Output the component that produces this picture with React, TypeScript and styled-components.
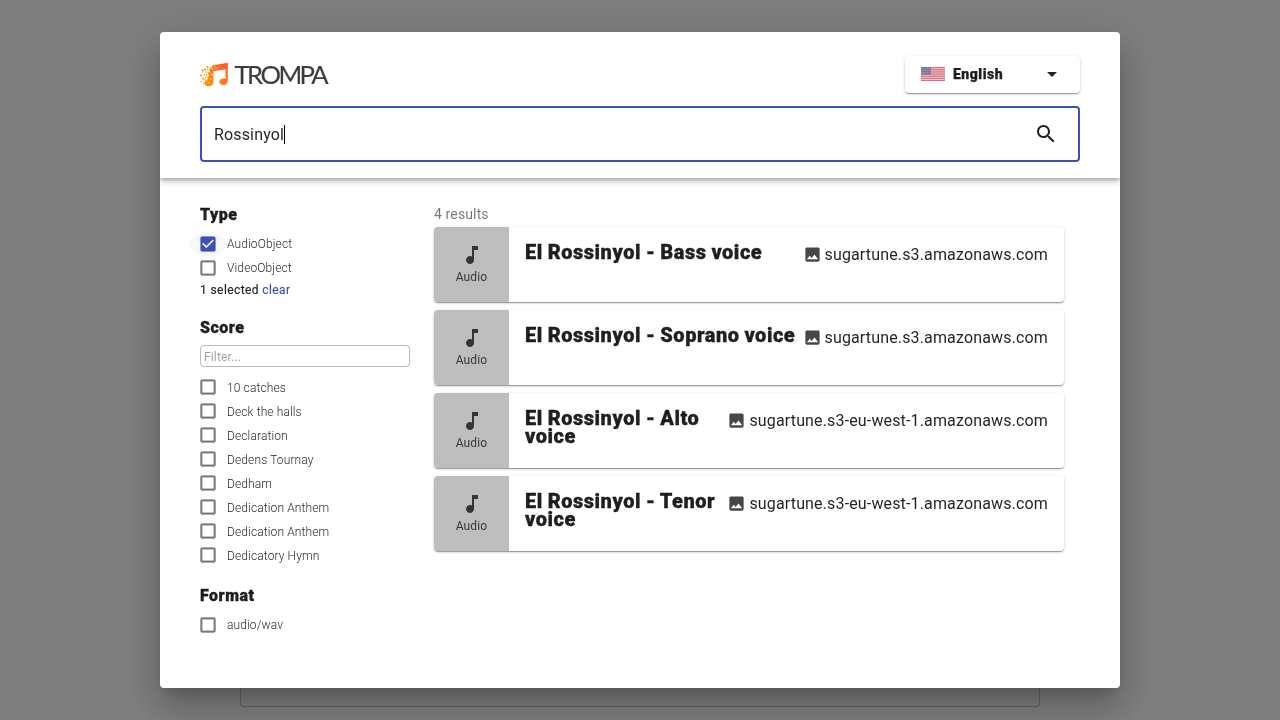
import React from "react";
import styled, { createGlobalStyle } from "styled-components";

const GlobalStyle = createGlobalStyle`
  *, *::before, *::after { box-sizing: border-box; }
  html, body { margin: 0; height: 100%; overflow: hidden; background: #fff; }
  body {
    font-family: Roboto, "Liberation Sans", sans-serif;
    color: rgba(0, 0, 0, 0.87);
  }
`;

const Page = styled.div`
  height: 100vh;
`;

const PagePanel = styled.div`
  width: 800px;
  height: 707px;
  margin: 0 auto;
  border: 1px solid #c4c4c4;
  border-top: 0;
  border-radius: 4px;
  clip-path: inset(100px 0 0 0);
`;

const Backdrop = styled.div`
  position: fixed;
  inset: 0;
  display: flex;
  justify-content: center;
  padding: 32px;
  background: rgba(0, 0, 0, 0.5);
`;

const Dialog = styled.div`
  display: flex;
  flex-direction: column;
  width: 960px;
  height: 656px;
  overflow: hidden;
  background: #fff;
  border-radius: 4px;
  box-shadow: 0 11px 15px -7px rgba(0, 0, 0, 0.2), 0 24px 38px 3px rgba(0, 0, 0, 0.14),
    0 9px 46px 8px rgba(0, 0, 0, 0.12);
`;

const Header = styled.header`
  padding: 24px 40px 16px;
  box-shadow: 0 2px 4px -1px rgba(0, 0, 0, 0.2), 0 4px 5px 0 rgba(0, 0, 0, 0.14),
    0 1px 10px 0 rgba(0, 0, 0, 0.12);
`;

const HeaderRow = styled.div`
  display: flex;
  justify-content: space-between;
  align-items: flex-start;
  height: 38px;
  margin-bottom: 12px;
`;

const Logo = styled.svg`
  display: block;
  width: 130px;
  height: 38px;
  overflow: visible;
`;

const cardShadow = `0 2px 1px -1px rgba(0, 0, 0, 0.2), 0 1px 1px 0 rgba(0, 0, 0, 0.14),
    0 1px 3px 0 rgba(0, 0, 0, 0.2)`;

const LanguageSelect = styled.div`
  display: flex;
  align-items: center;
  width: 175px;
  height: 37px;
  padding: 0 16px 1px;
  border-radius: 4px;
  box-shadow: ${cardShadow};
  font-size: 14px;
  font-weight: 900;
  letter-spacing: 0.5px;
  -webkit-text-stroke: 0.25px currentColor;
`;

const Flag = styled.svg`
  width: 24px;
  height: 14px;
  margin-right: 8px;
  opacity: 0.6;
`;

const Icon = styled.svg<{ $size?: number }>`
  flex: none;
  width: ${(p) => p.$size ?? 24}px;
  height: ${(p) => p.$size ?? 24}px;
  fill: currentColor;
`;

const SelectArrow = styled(Icon)`
  margin-left: auto;
`;

const SearchField = styled.div`
  display: flex;
  align-items: center;
  justify-content: space-between;
  height: 56px;
  padding: 0 20px 0 12px;
  border: 2px solid #3f51b5;
  border-radius: 4px;
  font-size: 16px;
  letter-spacing: 0.15px;
`;

const SearchText = styled.span`
  display: flex;
  align-items: center;
`;

const Caret = styled.span`
  width: 1px;
  height: 19px;
  background: #000;
`;

const Content = styled.div`
  display: flex;
  flex: 1;
  gap: 24px;
  padding: 25px 56px 0 40px;
`;

const Sidebar = styled.aside`
  flex: none;
  width: 210px;
  padding-top: 1px;
`;

const FacetGroup = styled.section`
  margin-bottom: 17px;
`;

const FacetTitle = styled.h2`
  margin: 0 0 6px;
  font-size: 16px;
  line-height: 22px;
  font-weight: 900;
  letter-spacing: 0.5px;
  -webkit-text-stroke: 0.3px currentColor;
`;

const Option = styled.label`
  display: flex;
  align-items: center;
  height: 24px;
  font-size: 12px;
  font-weight: 300;
  letter-spacing: 0.12px;
`;

const CheckSlot = styled.span<{ $checked?: boolean }>`
  display: flex;
  align-items: center;
  justify-content: center;
  width: 38px;
  height: 24px;
  margin: 0 0 0 -11px;
  border-radius: 50%;
  color: ${(p) => (p.$checked ? "#3f51b5" : "#7a7a7a")};
  background: ${(p) => (p.$checked ? "rgba(63, 81, 181, 0.04)" : "transparent")};
  path {
    stroke: currentColor;
    stroke-width: ${(p) => (p.$checked ? 0.25 : 0.45)};
  }
`;

const OptionList = styled.div`
  ${CheckSlot} {
    padding-bottom: 2px;
  }
`;

const Selection = styled.div`
  height: 20px;
  font-size: 12px;
  line-height: 20px;
  letter-spacing: 0.4px;
  -webkit-text-stroke: 0.15px currentColor;
`;

const ClearLink = styled.span`
  color: #3f51b5;
`;

const FilterInput = styled.input`
  display: block;
  width: 210px;
  height: 22px;
  margin: 0 0 9px;
  padding: 2px 3px 0;
  border: 1px solid #b9b9b9;
  border-radius: 4px;
  font: 400 12px Roboto, sans-serif;
  letter-spacing: 0.15px;
  outline: none;
  &::placeholder { color: #a2a2a2; opacity: 1; }
`;

const Results = styled.main`
  flex: 1;
  display: flex;
  flex-direction: column;
  gap: 8px;
`;

const ResultCount = styled.div`
  height: 16px;
  font-size: 14px;
  line-height: 22px;
  letter-spacing: 0.13px;
  color: rgba(0, 0, 0, 0.54);
`;

const Card = styled.article`
  display: flex;
  height: 75px;
  border-radius: 4px;
  overflow: hidden;
  box-shadow: ${cardShadow};
`;

const Thumb = styled.div`
  display: flex;
  flex: none;
  flex-direction: column;
  align-items: center;
  width: 75px;
  padding-top: 16px;
  background: #bdbdbd;
  color: rgba(0, 0, 0, 0.72);
  font-size: 12px;
  line-height: 20px;
  letter-spacing: 0.12px;
`;

const CardBody = styled.div`
  display: flex;
  flex: 1;
  justify-content: space-between;
  align-items: flex-start;
  padding: 16px 16px 0;
`;

const CardTitle = styled.h3`
  margin: 0;
  font-size: 20px;
  line-height: 18px;
  font-weight: 900;
  letter-spacing: 0.53px;
  word-spacing: -0.6px;
  -webkit-text-stroke: 0.3px currentColor;
`;

const Source = styled.span`
  display: flex;
  align-items: center;
  flex: none;
  gap: 3px;
  height: 24px;
  margin: -1px 0 0 6px;
  font-size: 16px;
  letter-spacing: 0.15px;
  white-space: nowrap;
  svg { color: rgba(0, 0, 0, 0.72); margin-top: 1px; }
`;

const specks = [
  [0, 14.5], [0.5, 21], [2, 11.5], [2, 17.6], [3.2, 22.6], [3.6, 14], [4, 8.6],
  [5, 16.5], [5.5, 11.5], [6.5, 6], [7, 9], [6, 14], [8.5, 12], [9.5, 6.5],
  [7.4, 16], [1.6, 9.4], [9.6, 9.4], [4.4, 19],
];

function TrompaLogo() {
  return (
    <Logo viewBox="0 -4 130 38">
      <defs>
        <linearGradient id="note" x1="0" y1="1" x2="1" y2="0">
          <stop offset="0" stopColor="#ff9800" />
          <stop offset="1" stopColor="#fc5a2c" />
        </linearGradient>
      </defs>
      <path
        fill="url(#note)"
        d="M12.2 5.4 27.8 2.8V20C27.8 23.2 26.1 25 23.2 25C20.8 25 19.3 23.7 19.3 21.8C19.3 19.8 21.1 18.4 23.4 18.4C24.4 18.4 25.2 18.6 25.6 18.8V9.2L13.4 11.2V22C13.4 24.9 11.6 26.3 8.6 26.3C5.8 26.3 4.2 24.9 4.6 22.7C4.9 21 6 19.6 7.6 19.4V17H9V14.6H8V12.6H10V10.6H9.4V8.6H11.4V7H12.2Z"
      />
      {specks.map(([x, y], i) => (
        <rect key={i} x={x} y={y} width={i % 3 ? 1.3 : 1.9} height={i % 3 ? 1.3 : 1.9} fill="#ff9d1c" />
      ))}
      <path
        fill="#fff"
        opacity=".8"
        d="M12 8.2h1.2v1.2H12zM15.4 7.4h1.2v1.2h-1.2zM8 22h1.2v1.2H8zM11 14h1.2v1.2H11zM10 18.4h1.2v1.2H10zM6.4 20.4h1v1h-1zM14 6.2h.9v.9H14z"
      />
      <text
        x="34.5"
        y="23.7"
        textLength="94"
        fontFamily="Lato, sans-serif"
        fontSize="25.6"
        fill="#3c3c3e"
        stroke="#3c3c3e"
        strokeWidth=".15"
      >
        TROMPA
      </text>
    </Logo>
  );
}

function UsFlag() {
  return (
    <Flag viewBox="0 0 26 14" preserveAspectRatio="none">
      <rect width="26" height="14" fill="#f6c6ce" />
      {[0, 2.15, 4.3, 6.45, 8.6, 10.75, 12.9].map((y) => (
        <rect key={y} y={y} width="26" height="1.3" fill="#c00a2a" />
      ))}
      <rect width="10.8" height="7.6" fill="#20205c" />
      {[1, 3, 5].map((y) =>
        [1, 3, 5, 7, 9].map((x) => (
          <circle key={`${x}-${y}`} cx={x} cy={y + 0.6} r=".3" fill="#fff" />
        ))
      )}
    </Flag>
  );
}

const CHECKED =
  "M19 3H5c-1.11 0-2 .9-2 2v14c0 1.1.89 2 2 2h14c1.11 0 2-.9 2-2V5c0-1.1-.89-2-2-2zm-9 14l-5-5 1.41-1.41L10 14.17l7.59-7.59L19 8l-9 9z";
const UNCHECKED =
  "M19 5v14H5V5h14m0-2H5c-1.1 0-2 .9-2 2v14c0 1.1.9 2 2 2h14c1.1 0 2-.9 2-2V5c0-1.1-.9-2-2-2z";
const SEARCH =
  "M15.5 14h-.79l-.28-.27C15.41 12.59 16 11.11 16 9.5 16 5.91 13.09 3 9.5 3S3 5.91 3 9.5 5.91 16 9.5 16c1.61 0 3.09-.59 4.23-1.57l.27.28v.79l5 4.99L20.49 19l-4.99-5zm-6 0C7.01 14 5 11.99 5 9.5S7.01 5 9.5 5 14 7.01 14 9.5 11.99 14 9.5 14z";
const NOTE = "M12 3v10.55c-.59-.34-1.27-.55-2-.55-2.21 0-4 1.79-4 4s1.79 4 4 4 4-1.79 4-4V7h4V3h-6z";
const IMAGE =
  "M21 19V5c0-1.1-.9-2-2-2H5c-1.1 0-2 .9-2 2v14c0 1.1.9 2 2 2h14c1.1 0 2-.9 2-2zM8.5 13.5l2.5 3.01L14.5 12l4.5 6H5l3.5-4.5z";

function Check({ label, checked }: { label: string; checked?: boolean }) {
  return (
    <Option>
      <CheckSlot $checked={checked}>
        <Icon $size={20} viewBox="0 0 24 24">
          <path d={checked ? CHECKED : UNCHECKED} />
        </Icon>
      </CheckSlot>
      {label}
    </Option>
  );
}

const scores = [
  "10 catches",
  "Deck the halls",
  "Declaration",
  "Dedens Tournay",
  "Dedham",
  "Dedication Anthem",
  "Dedication Anthem",
  "Dedicatory Hymn",
];

const results = [
  { title: "El Rossinyol - Bass voice", source: "sugartune.s3.amazonaws.com" },
  { title: "El Rossinyol - Soprano voice", source: "sugartune.s3.amazonaws.com" },
  { title: "El Rossinyol - Alto voice", source: "sugartune.s3-eu-west-1.amazonaws.com" },
  { title: "El Rossinyol - Tenor voice", source: "sugartune.s3-eu-west-1.amazonaws.com" },
];

export default function App() {
  return (
    <Page>
      <GlobalStyle />
      <PagePanel />
      <Backdrop>
        <Dialog>
          <Header>
            <HeaderRow>
              <TrompaLogo />
              <LanguageSelect>
                <UsFlag />
                English
                <SelectArrow viewBox="0 0 24 24">
                  <path d="M7 10l5 5 5-5z" />
                </SelectArrow>
              </LanguageSelect>
            </HeaderRow>
            <SearchField>
              <SearchText>
                Rossinyol
                <Caret />
              </SearchText>
              <Icon viewBox="0 0 24 24">
                <path d={SEARCH} />
              </Icon>
            </SearchField>
          </Header>
          <Content>
            <Sidebar>
              <FacetGroup>
                <FacetTitle>Type</FacetTitle>
                <Check label="AudioObject" checked />
                <Check label="VideoObject" />
                <Selection>
                  1 selected <ClearLink>clear</ClearLink>
                </Selection>
              </FacetGroup>
              <FacetGroup>
                <FacetTitle>Score</FacetTitle>
                <FilterInput placeholder="Filter..." />
                <OptionList>
                  {scores.map((s, i) => (
                    <Check key={i} label={s} />
                  ))}
                </OptionList>
              </FacetGroup>
              <FacetGroup>
                <FacetTitle>Format</FacetTitle>
                <Check label="audio/wav" />
              </FacetGroup>
            </Sidebar>
            <Results>
              <ResultCount>4 results</ResultCount>
              {results.map((r) => (
                <Card key={r.title}>
                  <Thumb>
                    <Icon viewBox="0 0 24 24">
                      <path d={NOTE} />
                    </Icon>
                    Audio
                  </Thumb>
                  <CardBody>
                    <CardTitle>{r.title}</CardTitle>
                    <Source>
                      <Icon $size={19} viewBox="0 0 24 24">
                        <path d={IMAGE} />
                      </Icon>
                      {r.source}
                    </Source>
                  </CardBody>
                </Card>
              ))}
            </Results>
          </Content>
        </Dialog>
      </Backdrop>
    </Page>
  );
}
